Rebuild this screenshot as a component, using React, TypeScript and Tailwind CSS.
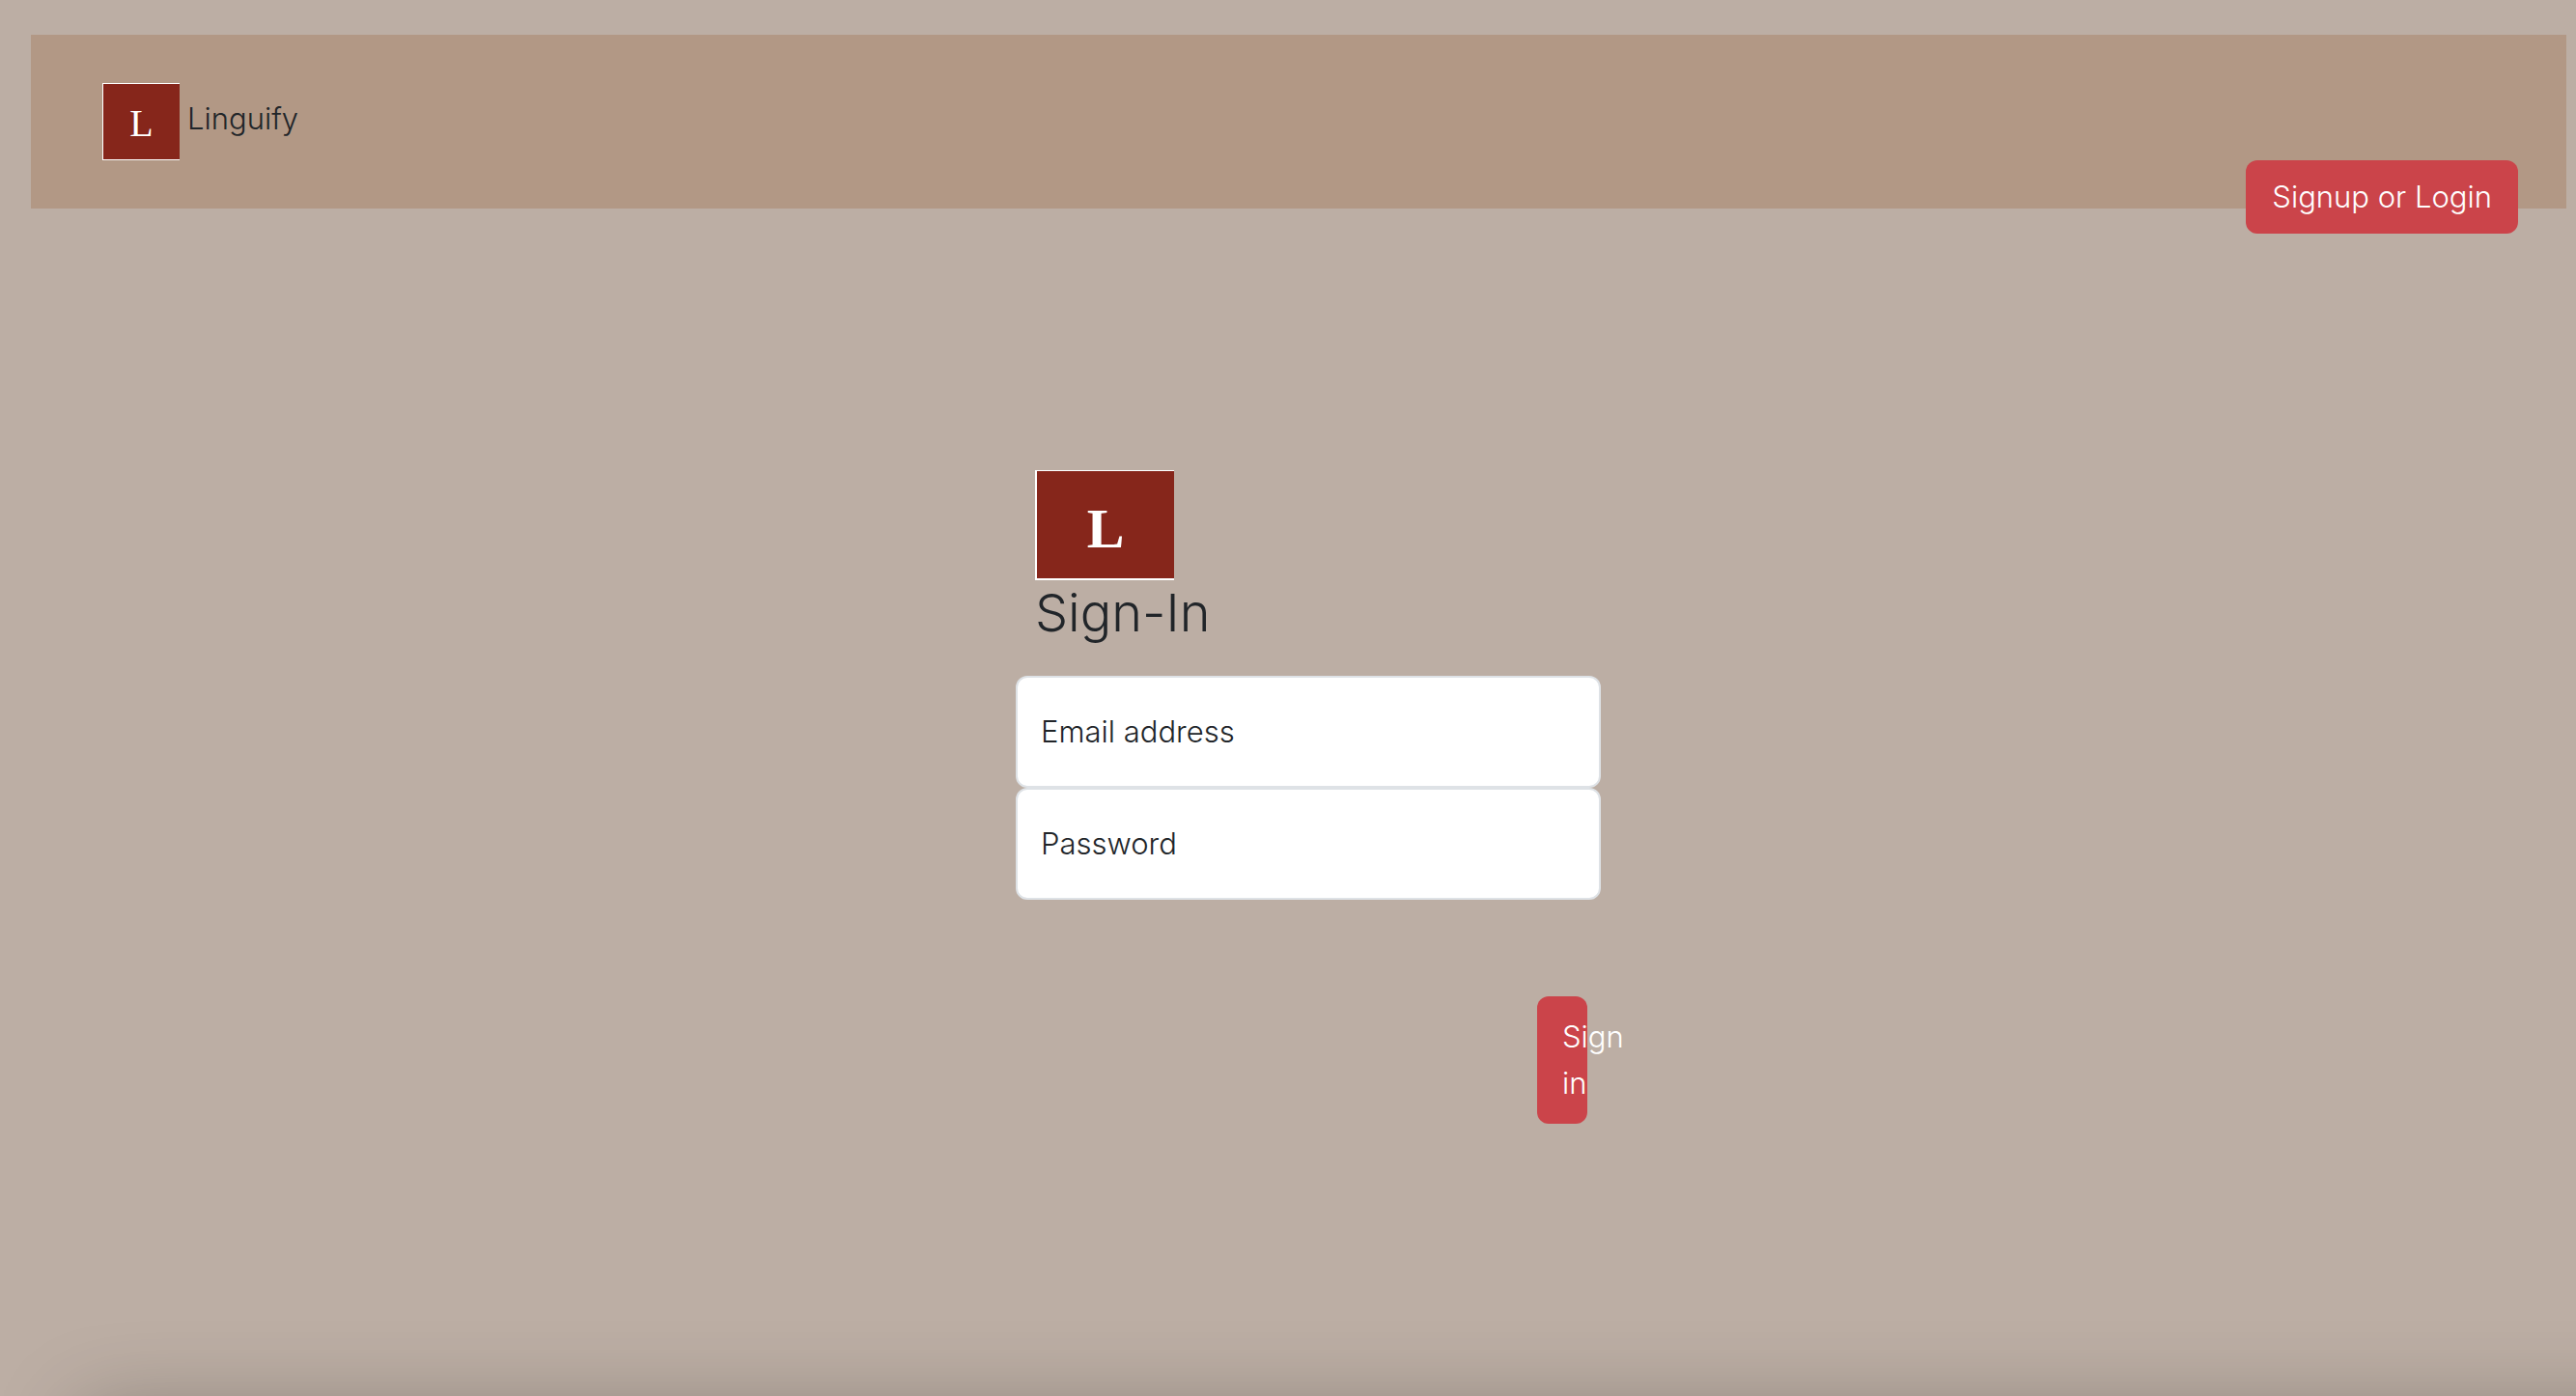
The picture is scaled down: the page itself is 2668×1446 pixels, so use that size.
type LogoProps = { box: string; letter: string };

function Logo({ box, letter }: LogoProps) {
  return (
    <div
      role="img"
      aria-label="Linguify logo"
      className={`flex items-center justify-center border-t border-white bg-[#86261b] font-['Liberation_Serif',serif] text-white ${box}`}
    >
      <span className={letter}>L</span>
    </div>
  );
}

type FieldProps = { id: string; type: string; label: string };

function Field({ id, type, label }: FieldProps) {
  return (
    <div className="relative">
      <input
        id={id}
        type={type}
        placeholder=" "
        className="peer block h-[116px] w-full rounded-xl border-2 border-[#dee2e6] bg-white px-6"
      />
      <label
        htmlFor={id}
        className="pointer-events-none absolute inset-0 hidden items-center px-[26px] peer-placeholder-shown:flex"
      >
        {label}
      </label>
    </div>
  );
}

export default function App() {
  return (
    <div className="relative flex min-h-screen flex-col overflow-hidden bg-[#bcaea4] font-['Inter',sans-serif] text-[31px] leading-[48px] font-light text-[#212529]">
      <header className="mt-9 mr-[10px] ml-8 flex items-start justify-between bg-[#b29885] py-[50px] pr-[50px] pl-[74px]">
        <a href="#" className="flex items-center gap-2">
          <Logo
            box="h-20 w-20 border-b border-l"
            letter="pt-1 text-[40px] leading-[44px] font-normal"
          />
          <span className="pb-1.5">Linguify</span>
        </a>
        <button
          type="button"
          className="mt-20 -mb-[76px] rounded-xl bg-[#cb444a] px-[27px] py-[14px] text-white"
        >
          Signup or Login
        </button>
      </header>

      <main className="flex justify-center pt-[271px] pl-[42px]">
        <form className="flex w-full max-w-[606px] flex-col" onSubmit={(e) => e.preventDefault()}>
          <div className="mb-8 pl-5">
            <Logo
              box="h-[114px] w-36 border-b-2 border-l-2"
              letter="pt-2 text-[58px] leading-[64px] font-bold"
            />
            <h1 className="text-[54px] leading-[67px]">Sign-In</h1>
          </div>
          <Field id="email" type="email" label="Email address" />
          <Field id="password" type="password" label="Password" />
          <button
            type="submit"
            className="mt-[100px] mr-[14px] w-[52px] self-end rounded-xl bg-[#cb444a] px-[26px] py-[18px] text-left text-white"
          >
            Sign in
          </button>
        </form>
      </main>

      <div className="pointer-events-none absolute -right-52 bottom-0 left-[84px] h-60 translate-y-full shadow-[0_16px_90px_0_rgba(0,0,0,0.28)]" />
    </div>
  );
}
